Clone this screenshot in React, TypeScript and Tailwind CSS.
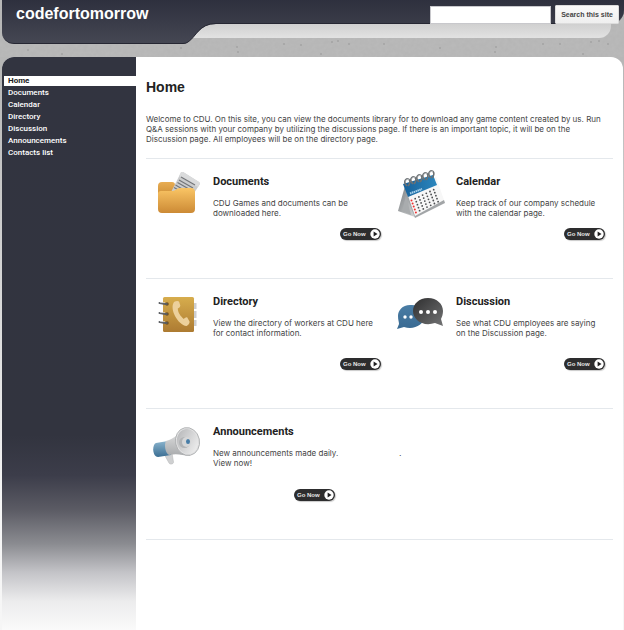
import React from "react";

function FolderIcon() {
  return (
    <svg viewBox="0 0 46 46" className="h-[46px] w-[46px]" aria-hidden="true">
      <defs>
        <linearGradient id="folderBack" x1="0" y1="0" x2="0" y2="1">
          <stop offset="0" stopColor="#e8ad53" />
          <stop offset="1" stopColor="#c98a32" />
        </linearGradient>
        <linearGradient id="folderFront" x1="0" y1="0" x2="0" y2="1">
          <stop offset="0" stopColor="#fac565" />
          <stop offset="1" stopColor="#cc8a35" />
        </linearGradient>
      </defs>
      <path d="M4 14a4 4 0 0 1 4-4h10a3 3 0 0 1 3 3v13H4z" fill="url(#folderBack)" />
      <path d="M27 .6a2 2 0 0 1 2.500-.4L45 10a2 2 0 0 1 .6 2.500L37 26H14z" fill="#cbcccd" />
      <path d="M27 .6a2 2 0 0 1 2.500-.4L45 10a2 2 0 0 1 .6 2.500L44 15 25 4z" fill="#dadbdc" />
      <path d="M27 5l14 8M25 8l14 8M23.500 10.500l14 8M21.500 13l11 6.500M20 15.500l8 4.500" stroke="#75777a" strokeWidth="1.200" />
      <path d="M4 22a3 3 0 0 1 3-3h11c4 0 4-3 8-3h11a4 4 0 0 1 4 4v17a4 4 0 0 1-4 4H8a4 4 0 0 1-4-4z" fill="url(#folderFront)" />
    </svg>
  );
}

function CalendarIcon() {
  const rows = [0, 1, 2, 3, 4];
  const cols = [0, 1, 2, 3, 4, 5, 6];
  return (
    <svg viewBox="0 0 50 50" className="h-[50px] w-[50px]" aria-hidden="true">
      <defs>
        <linearGradient id="calSide" x1="0" y1="0" x2="1" y2="1">
          <stop offset="0" stopColor="#777b7e" />
          <stop offset="1" stopColor="#d4d6d7" />
        </linearGradient>
        <linearGradient id="calTop" x1="0" y1="0" x2="1" y2="0">
          <stop offset="0" stopColor="#17619a" />
          <stop offset="1" stopColor="#2b86bd" />
        </linearGradient>
      </defs>
      <path d="M8 17 1 42l17 6z" fill="url(#calSide)" />
      <path d="M9 27 5 42l9 4z" fill="#a9acae" />
      <path d="M10 28 18 49 48 34 47 31z" fill="#a2a5a7" />
      <path d="M8 18 39 8 47 31 18 47z" fill="#f7f7f7" />
      <path d="M6 15 36 6 40 16 11 28z" fill="url(#calTop)" />
      <path d="M13 24.500l12-4.500" stroke="#a9d2ec" strokeWidth="2" strokeDasharray="1.500 .5" />
      {rows.map((r) =>
        cols.map((c) => (
          <circle
            key={`${r}-${c}`}
            cx={14.5 + c * 3.7 + r * 1.1}
            cy={31.5 - c * 1.8 + r * 3}
            r={c === 0 ? 1 : 0.9}
            fill={c === 0 ? "#f03030" : "#4b4d50"}
          />
        ))
      )}
      {[10, 16, 22, 28, 34].map((x, i) => (
        <g key={x} fill="none">
          <path d={`M${x} ${17 - i * 2}c-4-3-2-8 1-7s2 5 0 7`} stroke="#6b7073" strokeWidth="1.500" />
          <path d={`M${x - 1} ${12 - i * 2}c1-2 2-2 3-1`} stroke="#d5d8da" strokeWidth=".8" />
        </g>
      ))}
    </svg>
  );
}

function DirectoryIcon() {
  return (
    <svg viewBox="0 0 40 38" className="h-[38px] w-[40px]" aria-hidden="true">
      <defs>
        <linearGradient id="bookCover" x1="0" y1="0" x2="0" y2="1">
          <stop offset="0" stopColor="#d7ad4d" />
          <stop offset="1" stopColor="#ad7b32" />
        </linearGradient>
      </defs>
      <path d="M34 7h4.500v6H34zM34 15h4.500v7H34zM34 24h4.500v6H34z" fill="#cdced0" />
      <rect x="5" y="1" width="31" height="35" rx="1.500" fill="url(#bookCover)" />
      <path
        d="M16 6c1.500-1 4-1.500 5-.5l1.300 4c0 1.500-1.500 2.500-2.500 3 0 4 3 8 6 10.500 1-1 2.500-2 3.500-1.500l2.200 4c.5 1.500-1.500 4-3 4.500C20 29 11 13 16 6z"
        fill="#ecd09b"
      />
      {[8, 18, 27].map((y) => (
        <g key={y}>
          <circle cx="9" cy={y} r="1.800" fill="#6d5226" />
          <path d={`M1.500 ${y - 1}c2 0 2 1 7 1`} fill="none" stroke="#5a5d61" strokeWidth="2" strokeLinecap="round" />
          <path d={`M2 ${y - 1.4}h5`} stroke="#d9dbde" strokeWidth=".7" />
        </g>
      ))}
    </svg>
  );
}

function DiscussionIcon() {
  return (
    <svg viewBox="0 0 46 34" className="h-[34px] w-[46px]" aria-hidden="true">
      <defs>
        <linearGradient id="bubbleDark" x1="0" y1="0" x2="1" y2="1">
          <stop offset="0" stopColor="#2e2e2f" />
          <stop offset="1" stopColor="#727374" />
        </linearGradient>
        <linearGradient id="bubbleBlue" x1="0" y1="0" x2="0" y2="1">
          <stop offset="0" stopColor="#4a7da5" />
          <stop offset="1" stopColor="#396a92" />
        </linearGradient>
      </defs>
      <path d="M15 7C6 6 1 12 1 18c0 4 1 6 1 8l-2 5 7-2c10 3 20-2 20-10S22 7 15 7z" fill="url(#bubbleBlue)" />
      <circle cx="8" cy="19" r="1.700" fill="#fff" />
      <circle cx="14" cy="19" r="1.700" fill="#fff" />
      <path d="M31 0c9 0 15 6 15 13 0 3-1 6-2 8l2 7-8-3c-12 4-22-3-22-12C16 6 22 0 31 0z" fill="url(#bubbleDark)" />
      <circle cx="24" cy="14" r="2" fill="#fff" />
      <circle cx="31" cy="14" r="2" fill="#fff" />
      <circle cx="38" cy="14" r="2" fill="#fff" />
    </svg>
  );
}

function MegaphoneIcon() {
  return (
    <svg viewBox="0 0 48 40" className="h-[40px] w-[48px]" aria-hidden="true">
      <defs>
        <linearGradient id="hornBody" x1="0" y1="0" x2="0" y2="1">
          <stop offset="0" stopColor="#e7e7e7" />
          <stop offset="1" stopColor="#a8aaac" />
        </linearGradient>
        <linearGradient id="hornBlue" x1="0" y1="0" x2="0" y2="1">
          <stop offset="0" stopColor="#8ab4cd" />
          <stop offset="1" stopColor="#3b6e93" />
        </linearGradient>
        <linearGradient id="hornBell" x1="0" y1="0" x2="1" y2="1">
          <stop offset="0" stopColor="#b3b4b6" />
          <stop offset="1" stopColor="#f4f4f4" />
        </linearGradient>
      </defs>
      <path d="M11 27l5 9c1 2 5 1 4.500-1L19 26z" fill="#cfd0d1" stroke="#b0b2b4" strokeWidth=".5" />
      <path d="M3 16l12-2 3 14-13 2c-6 0-6-13-2-14z" fill="url(#hornBlue)" />
      <path d="M13 14C22 12 25 6 33 1l4 28c-8-1-13-3-21-1-4-2-5-11-3-14z" fill="url(#hornBody)" />
      <ellipse cx="34.500" cy="14.500" rx="12" ry="14" transform="rotate(-12 34.500 14.500)" fill="#e2e2e3" stroke="#a9abad" strokeWidth=".8" />
      <ellipse cx="34.500" cy="14.500" rx="10.500" ry="12.500" transform="rotate(-12 34.500 14.500)" fill="url(#hornBell)" />
      <ellipse cx="31.500" cy="15.500" rx="5.500" ry="5.500" fill="#b2b4b6" />
      <ellipse cx="33.500" cy="15" rx="4.500" ry="5" fill="#d6d7d8" />
      <ellipse cx="35" cy="14.500" rx="2" ry="2.500" fill="#477da7" />
    </svg>
  );
}

function GoNow({ to }: { to: string }) {
  return (
    <a
      href={to}
      className="flex h-3 w-[41px] items-center justify-between rounded-full bg-[#2d2d2e] pl-[3px] pr-px text-[6px] leading-3 font-bold whitespace-nowrap text-[#e8e8e8] shadow-[1px_1px_1px_#c9c9c9]"
    >
      Go Now
      <svg viewBox="0 0 10 10" className="h-[10px] w-[10px]" aria-hidden="true">
        <circle cx="5" cy="5" r="4.700" fill="#fff" />
        <path d="M3.600 2.500 7.500 5 3.600 7.500z" fill="#1f1f20" />
      </svg>
    </a>
  );
}

type CardProps = {
  title: string;
  to: string;
  icon: React.ReactNode;
  children: React.ReactNode;
  iconClass: string;
  goClass: string;
};

function Card({ title, to, icon, children, iconClass, goClass }: CardProps) {
  return (
    <section className="flex">
      <div className={`shrink-0 ${iconClass}`}>{icon}</div>
      <div className="flex min-w-0 flex-1 flex-col pt-4">
        <h2 className="font-[Roboto,sans-serif] text-[11px] leading-[14px] font-bold text-[#222]">{title}</h2>
        <p className="mt-[9px] font-[Inter,sans-serif] text-[8px] leading-[10px]">{children}</p>
        <div className={goClass}>
          <GoNow to={to} />
        </div>
      </div>
    </section>
  );
}

function HeaderShape() {
  return (
    <div className="absolute inset-0 flex items-start pl-[2px]" aria-hidden="true">
      <div className="h-11 w-[178px] rounded-bl-xl border-b border-[#262733] bg-linear-to-b from-[#2e303e] to-[#454753]" />
      <svg viewBox="0 0 40 44" className="h-11 w-10">
        <defs>
          <linearGradient id="headFill" x1="0" y1="0" x2="0" y2="44" gradientUnits="userSpaceOnUse">
            <stop offset="0" stopColor="#2e303e" />
            <stop offset="1" stopColor="#454753" />
          </linearGradient>
          <linearGradient id="stripFill" x1="0" y1="24" x2="0" y2="38" gradientUnits="userSpaceOnUse">
            <stop offset="0" stopColor="#d0d0d0" />
            <stop offset="1" stopColor="#e2e2e2" />
          </linearGradient>
        </defs>
        <path d="M8 38 20 22h20v16z" fill="url(#stripFill)" />
        <path d="M0 0h40v24h-4C19 24 16 37 8 42q-2 2-5 2H0z" fill="url(#headFill)" />
        <path d="M40 23.500h-4C19 23.500 16 37 8 42q-2 1.500-5 1.500H0" fill="none" stroke="#262733" />
      </svg>
      <div className="flex-1">
        <div className="h-6 rounded-br-[14px] border-b border-[#262733] bg-linear-to-b from-[#2e303e] to-[#3a3c48]" />
        <div className="mr-[13px] h-[14px] rounded-br-xl bg-linear-to-b from-[#d0d0d0] to-[#e2e2e2]" />
      </div>
    </div>
  );
}

function Concrete() {
  const specks = [
    [181, 48], [237, 47], [238, 52], [284, 44], [301, 45], [332, 42], [338, 41], [349, 44],
    [384, 44], [440, 48], [496, 47], [495, 52], [543, 44], [560, 44], [591, 42], [599, 41],
    [608, 44], [62, 54], [28, 50], [321, 54], [583, 54],
  ];
  return (
    <svg className="absolute inset-0 h-full w-full" aria-hidden="true">
      <filter id="grain">
        <feTurbulence type="fractalNoise" baseFrequency="0.25" numOctaves="2" />
        <feColorMatrix values="0 0 0 0 0.4  0 0 0 0 0.4  0 0 0 0 0.4  0.4 0 0 0 -0.1" />
      </filter>
      <rect width="100%" height="100%" filter="url(#grain)" />
      {specks.map(([x, y]) => (
        <circle key={`${x}-${y}`} cx={x} cy={y} r=".7" fill="#8f8f8f" />
      ))}
    </svg>
  );
}

const links = ["Documents", "Calendar", "Directory", "Discussion", "Announcements", "Contacts list"];

export default function App() {
  return (
    <div className="flex min-h-screen flex-col bg-linear-to-b from-[#b6b6b6] from-10% to-[#f6f6f6] to-80% font-['Liberation_Sans',Arial,sans-serif] text-[#444]">
      <header className="relative h-[57px] bg-[#b9b9b9]">
        <Concrete />
        <HeaderShape />
        <div className="relative flex items-start justify-between pr-[5px] pl-4">
          <a href="#home" className="mt-1 text-[16px] leading-5 font-bold text-white">
            codefortomorrow
          </a>
          <form role="search" className="mt-[5px] flex items-center gap-1" onSubmit={(e) => e.preventDefault()}>
            <input
              type="text"
              aria-label="Search this site"
              className="h-[18px] w-[121px] border border-[#c8c8cc] bg-white px-1 text-[8px] outline-none"
            />
            <button
              type="submit"
              className="h-[19px] w-16 rounded-[1px] border border-[#dcdcdc] bg-linear-to-b from-[#fafafa] to-[#efefef] text-[7px] leading-4 font-bold whitespace-nowrap text-[#444]"
            >
              Search this site
            </button>
          </form>
        </div>
      </header>

      <div className="mr-px ml-[2px] flex flex-1 overflow-hidden rounded-t-xl bg-white">
        <nav className="w-[134px] shrink-0 bg-[linear-gradient(to_bottom,#323440_0%,#32343f_66%,#3c3d4a_73%,#5b5b64_79%,#8b8c91_85%,#c4c4c8_90%,#ececed_95%,#fafafa_100%)] pt-[19px] pl-[2px]">
          <ul className="flex flex-col font-[Roboto,sans-serif] text-[8px] font-medium text-white">
            <li>
              <a href="#home" aria-current="page" className="block bg-white pl-1 leading-[10px] font-bold text-[#222]">
                Home
              </a>
            </li>
            {links.map((l) => (
              <li key={l}>
                <a href={`#${l}`} className="block pt-[2px] pl-1 leading-[10px]">
                  {l}
                </a>
              </li>
            ))}
          </ul>
        </nav>

        <main className="min-w-0 flex-1 pr-[10px] pb-20 pl-[10px]">
          <h1 className="mt-[21px] text-[14px] leading-[18px] font-bold text-[#222]">Home</h1>
          <p className="mt-[18px] font-[Inter,sans-serif] text-[8px] leading-[10px]">
            Welcome to CDU. On this site, you can view the documents library for to download any game content created by us. Run Q&amp;A sessions with your company by utilizing the discussions page. If there is an important topic, it will be on the <br />
            Discussion page. All employees will be on the directory page.
          </p>

          <div className="mt-[14px] grid h-[120px] grid-cols-[251fr_216fr] border-t border-[#e4e8ec]">
            <Card title="Documents" to="#documents" icon={<FolderIcon />} iconClass="w-[67px] pl-2 pt-[13px]" goClass="mt-[10px] flex justify-end pr-4">
              CDU Games and documents can be <br />
              downloaded here.
            </Card>
            <Card title="Calendar" to="#calendar" icon={<CalendarIcon />} iconClass="w-[59px] pt-[10px]" goClass="mt-[10px] flex justify-end pr-2">
              Keep track of our company schedule <br />
              with the calendar page.
            </Card>
          </div>
          <div className="grid h-[130px] grid-cols-[251fr_216fr] border-t border-[#e4e8ec]">
            <Card title="Directory" to="#directory" icon={<DirectoryIcon />} iconClass="w-[67px] pl-3 pt-[17px]" goClass="mt-5 flex justify-end pr-4">
              View the directory of workers at CDU here <br />
              for contact information.
            </Card>
            <Card title="Discussion" to="#discussion" icon={<DiscussionIcon />} iconClass="w-[59px] pt-[19px]" goClass="mt-5 flex justify-end pr-2">
              See what CDU employees are saying <br />
              on the Discussion page.
            </Card>
          </div>
          <div className="grid h-[132px] grid-cols-[251fr_216fr] border-y border-[#e4e8ec]">
            <Card title="Announcements" to="#announcements" icon={<MegaphoneIcon />} iconClass="w-[67px] pl-[7px] pt-[18px]" goClass="mt-[21px] flex pl-[81px]">
              New announcements made daily. <br />
              View now!
            </Card>
            <p className="mt-[39px] pl-[2px] text-[9px] leading-[10px]">.</p>
          </div>
        </main>
      </div>
    </div>
  );
}
